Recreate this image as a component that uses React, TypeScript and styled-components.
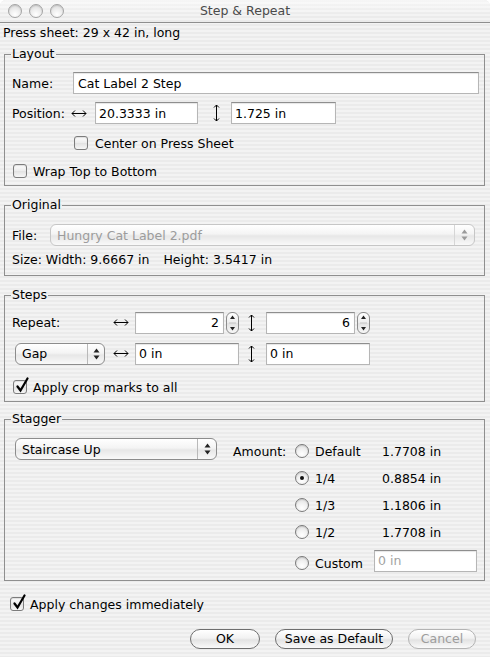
import React from "react";
import styled, { createGlobalStyle } from "styled-components";

const GlobalStyle = createGlobalStyle`
  html, body { margin: 0; padding: 0; background: #ffffff; }
  body {
    font-family: "DejaVu Sans", Verdana, "Liberation Sans", sans-serif;
    font-size: 12.5px;
    color: #000;
  }
  *, *::before, *::after { box-sizing: border-box; }
`;

const stripes =
  "repeating-linear-gradient(to bottom, #ebebeb 0px, #ebebeb 2px, #f3f3f3 2px, #f3f3f3 4px)";

const Window = styled.div`
  width: 490px;
  height: 657px;
  display: flex;
  flex-direction: column;
  background: ${stripes};
  border-radius: 6px 6px 0 0;
  overflow: hidden;
`;

const TitleBar = styled.div`
  flex: none;
  height: 23px;
  display: grid;
  grid-template-columns: 1fr auto 1fr;
  align-items: center;
  border-bottom: 1px solid #8e8e8e;
  background: linear-gradient(rgba(255, 255, 255, 0.55), rgba(255, 255, 255, 0) 70%), ${stripes};
`;

const Lights = styled.div`
  display: flex;
  gap: 7px;
  padding-left: 8px;
`;

const Light = styled.span`
  width: 14px;
  height: 14px;
  border-radius: 50%;
  border: 1px solid #a4a4a4;
  background: radial-gradient(circle at 50% 78%, #ffffff 0%, #f0f0f0 40%, #d4d4d4 100%);
  box-shadow: inset 0 1px 1px rgba(0, 0, 0, 0.12);
`;

const Title = styled.div`
  color: #4a4a4a;
  line-height: 16px;
`;

const Content = styled.div`
  display: flex;
  flex-direction: column;
  padding: 0 5px 0 4px;
`;

const SheetInfo = styled.div`
  height: 16px;
  line-height: 16px;
  margin: 2px 0 0 -1px;
`;

const Group = styled.fieldset<{ $mt: number }>`
  margin: ${(p) => p.$mt}px 0 0 0;
  padding: 0;
  min-width: 0;
  border: 1px solid #8f8f8f;
`;

const GroupTitle = styled.legend`
  margin-left: 6px;
  padding: 0 1px;
  height: 14px;
  line-height: 14px;
`;

const GroupBody = styled.div<{ $pad: string }>`
  padding: ${(p) => p.$pad};
`;

const Row = styled.div<{ $mt?: number; $h?: number; $pl?: number }>`
  display: flex;
  align-items: center;
  margin-top: ${(p) => p.$mt ?? 0}px;
  height: ${(p) => p.$h ?? 22}px;
  padding-left: ${(p) => p.$pl ?? 0}px;
`;

const Label = styled.span<{ $w?: number }>`
  flex: none;
  width: ${(p) => (p.$w ? `${p.$w}px` : "auto")};
  white-space: nowrap;
`;

const Field = styled.input<{ $w?: number; $right?: boolean; $muted?: boolean; $pl?: number }>`
  flex: ${(p) => (p.$w ? "none" : "1")};
  width: ${(p) => (p.$w ? `${p.$w}px` : "auto")};
  min-width: 0;
  height: 22px;
  margin: 0;
  padding: 0 ${(p) => (p.$right ? 4 : 3)}px 0 ${(p) => p.$pl ?? 3}px;
  border: 1px solid #b6b6b6;
  border-top-color: #8e8e8e;
  background: #ffffff;
  box-shadow: inset 0 1px 1px rgba(0, 0, 0, 0.1);
  font: inherit;
  color: ${(p) => (p.$muted ? "#a2a2a2" : "#000")};
  text-align: ${(p) => (p.$right ? "right" : "left")};
  outline: none;
`;

const ArrowSlot = styled.span<{ $ml?: number; $mr?: number }>`
  flex: none;
  display: flex;
  align-items: center;
  margin-left: ${(p) => p.$ml ?? 0}px;
  margin-right: ${(p) => p.$mr ?? 0}px;
`;

const Check = styled.span`
  position: relative;
  flex: none;
  width: 14px;
  height: 14px;
  border-radius: 3px;
  border: 1px solid #7c7c7c;
  background: linear-gradient(#fdfdfd, #ececec 50%, #e2e2e2 51%, #f6f6f6);
  box-shadow: inset 0 1px 1px rgba(0, 0, 0, 0.12);
`;

const CheckMark = styled.svg`
  position: absolute;
  left: 1px;
  top: -4px;
`;

const CheckRow = styled.label<{ $mt: number; $pl: number; $gap?: number }>`
  display: flex;
  align-items: center;
  gap: ${(p) => p.$gap ?? 6}px;
  height: 18px;
  margin-top: ${(p) => p.$mt}px;
  padding-left: ${(p) => p.$pl}px;
`;

const Radio = styled.span<{ $on?: boolean }>`
  flex: none;
  width: 14px;
  height: 14px;
  border-radius: 50%;
  border: 1px solid #7a7a7a;
  background: radial-gradient(circle at 50% 75%, #ffffff 0%, #f1f1f1 45%, #d9d9d9 100%);
  box-shadow: inset 0 1px 1px rgba(0, 0, 0, 0.12);
  display: flex;
  align-items: center;
  justify-content: center;

  &::after {
    content: "";
    display: ${(p) => (p.$on ? "block" : "none")};
    width: 4px;
    height: 4px;
    border-radius: 50%;
    background: #111;
  }
`;

const Popup = styled.div<{ $w?: number; $disabled?: boolean; $ml?: number }>`
  flex: ${(p) => (p.$w ? "none" : "1")};
  width: ${(p) => (p.$w ? `${p.$w}px` : "auto")};
  margin-left: ${(p) => p.$ml ?? 0}px;
  height: 22px;
  display: flex;
  align-items: stretch;
  border: 1px solid ${(p) => (p.$disabled ? "#c6c6c6" : "#8c8c8c")};
  border-radius: 6px;
  background: linear-gradient(#ffffff, #f4f4f4 45%, #e7e7e7 55%, #f9f9f9);
  color: ${(p) => (p.$disabled ? "#9c9c9c" : "#000")};
`;

const PopupText = styled.span`
  flex: 1;
  display: flex;
  align-items: center;
  padding-left: 6px;
  white-space: nowrap;
  overflow: hidden;
`;

const PopupArrows = styled.span<{ $w: number; $disabled?: boolean }>`
  flex: none;
  width: ${(p) => p.$w}px;
  display: flex;
  align-items: center;
  justify-content: center;
  border-left: 1px solid ${(p) => (p.$disabled ? "#d6d6d6" : "#b9b9b9")};
`;

const Stepper = styled.span`
  flex: none;
  width: 13px;
  height: 22px;
  margin-left: 2px;
  border: 1px solid #8c8c8c;
  border-radius: 6px;
  background: linear-gradient(#ffffff, #ececec 50%, #e2e2e2 51%, #f7f7f7);
  display: flex;
  align-items: center;
  justify-content: center;
`;

const NumberBox = styled.div`
  display: flex;
  align-items: center;
  width: 104px;
`;

const StepsGrid = styled.div`
  display: grid;
  grid-template-columns: 101px 22px 104px 27px 104px;
  grid-template-rows: 23px 23px;
  row-gap: 8px;
  align-items: center;
`;

const VSlot = styled.span`
  display: flex;
  padding-left: 9px;
`;

const StaggerBody = styled.div`
  display: flex;
  align-items: flex-start;
  padding: 12px 0 8px 10px;
`;

const AmountGrid = styled.div`
  display: grid;
  grid-template-columns: 62px 20px 59px 103px;
  grid-template-rows: 20px 20px 20px 20px 23px;
  row-gap: 7px;
  align-items: center;
  margin: 3px 0 0 16px;
`;

const Value = styled.span`
  padding-left: 8px;
  white-space: nowrap;
`;

const Shift = styled.span`
  display: flex;
  margin-top: 5px;
`;

const SizeLine = styled.div`
  display: flex;
  gap: 14px;
  height: 16px;
  line-height: 16px;
  margin-top: 6px;
`;

const ButtonBar = styled.div`
  display: flex;
  justify-content: flex-end;
  gap: 15px;
  margin: 16px 9px 0 0;
`;

const Button = styled.button<{ $w: number; $disabled?: boolean }>`
  width: ${(p) => p.$w}px;
  height: 20px;
  margin: 0;
  padding: 0;
  border: 1px solid ${(p) => (p.$disabled ? "#b3b3b3" : "#6e6e6e")};
  border-radius: 10px;
  background: linear-gradient(#ffffff, #f2f2f2 45%, #e3e3e3 55%, #fafafa);
  font: inherit;
  line-height: 18px;
  color: ${(p) => (p.$disabled ? "#9d9d9d" : "#000")};
`;

const HArrow = () => (
  <svg width="16" height="9" viewBox="0 0 16 9">
    <path d="M1 4.5H15M4 1.5L1 4.5L4 7.5M12 1.5L15 4.5L12 7.5" fill="none" stroke="#000" strokeWidth="1" />
  </svg>
);

const VArrow = () => (
  <svg width="7" height="18" viewBox="0 0 7 18">
    <path d="M3.5 1V17M1 3.5L3.5 1L6 3.5M1 14.5L3.5 17L6 14.5" fill="none" stroke="#000" strokeWidth="1" />
  </svg>
);

const UpDown = ({ color = "#222" }: { color?: string }) => (
  <svg width="7" height="12" viewBox="0 0 7 12">
    <path d="M3.5 0.5L6.5 4.5H0.5Z M3.5 11.5L6.5 7.5H0.5Z" fill={color} />
  </svg>
);

const StepArrows = () => (
  <svg width="7" height="18" viewBox="0 0 7 18">
    <path d="M3.5 1.5L6 5H1Z M3.5 16.5L6 13H1Z" fill="#222" />
    <path d="M0 9H7" stroke="#c4c4c4" strokeWidth="1" />
  </svg>
);

const CheckBox = ({ checked }: { checked?: boolean }) => (
  <Check>
    {checked && (
      <CheckMark width="16" height="17" viewBox="0 0 16 17">
        <path d="M2.5 9.5L5.5 13.5L12.5 1.5" fill="none" stroke="#000" strokeWidth="2.2" strokeLinecap="round" />
      </CheckMark>
    )}
  </Check>
);

const amounts = [
  { label: "Default", value: "1.7708 in", on: false },
  { label: "1/4", value: "0.8854 in", on: true },
  { label: "1/3", value: "1.1806 in", on: false },
  { label: "1/2", value: "1.7708 in", on: false },
];

export default function App() {
  return (
    <>
      <GlobalStyle />
      <Window>
        <TitleBar>
          <Lights>
            <Light />
            <Light />
            <Light />
          </Lights>
          <Title>Step &amp; Repeat</Title>
          <span />
        </TitleBar>

        <Content>
          <SheetInfo>Press sheet: 29 x 42 in, long</SheetInfo>

          <Group $mt={6}>
            <GroupTitle>Layout</GroupTitle>
            <GroupBody $pad="11px 5px 5px 7px">
              <Row>
                <Label $w={61}>Name:</Label>
                <Field defaultValue="Cat Label 2 Step" readOnly $pl={4} />
              </Row>
              <Row $mt={8}>
                <Label $w={59}>Position:</Label>
                <ArrowSlot $mr={8}>
                  <HArrow />
                </ArrowSlot>
                <Field $w={103} defaultValue="20.3333 in" readOnly />
                <ArrowSlot $ml={15} $mr={11}>
                  <VArrow />
                </ArrowSlot>
                <Field $w={105} defaultValue="1.725 in" readOnly />
              </Row>
              <CheckRow $mt={10} $pl={62} $gap={7}>
                <CheckBox />
                Center on Press Sheet
              </CheckRow>
              <CheckRow $mt={10} $pl={1}>
                <CheckBox />
                Wrap Top to Bottom
              </CheckRow>
            </GroupBody>
          </Group>

          <Group $mt={12}>
            <GroupTitle>Original</GroupTitle>
            <GroupBody $pad="12px 9px 7px 7px">
              <Row>
                <Label $w={38}>File:</Label>
                <Popup $disabled>
                  <PopupText>Hungry Cat Label 2.pdf</PopupText>
                  <PopupArrows $w={20} $disabled>
                    <UpDown color="#9a9a9a" />
                  </PopupArrows>
                </Popup>
              </Row>
              <SizeLine>
                <span>Size: Width: 9.6667 in</span>
                <span>Height: 3.5417 in</span>
              </SizeLine>
            </GroupBody>
          </Group>

          <Group $mt={12}>
            <GroupTitle>Steps</GroupTitle>
            <GroupBody $pad="9px 5px 5px 7px">
              <StepsGrid>
                <Label>Repeat:</Label>
                <HArrow />
                <NumberBox>
                  <Field $w={89} $right defaultValue="2" readOnly />
                  <Stepper>
                    <StepArrows />
                  </Stepper>
                </NumberBox>
                <VSlot>
                  <VArrow />
                </VSlot>
                <NumberBox>
                  <Field $w={89} $right defaultValue="6" readOnly />
                  <Stepper>
                    <StepArrows />
                  </Stepper>
                </NumberBox>

                <Popup $w={90} $ml={3}>
                  <PopupText>Gap</PopupText>
                  <PopupArrows $w={17}>
                    <UpDown />
                  </PopupArrows>
                </Popup>
                <HArrow />
                <Field $w={104} defaultValue="0 in" readOnly />
                <VSlot>
                  <VArrow />
                </VSlot>
                <Field $w={104} defaultValue="0 in" readOnly />
              </StepsGrid>
              <CheckRow $mt={13} $pl={1}>
                <CheckBox checked />
                Apply crop marks to all
              </CheckRow>
            </GroupBody>
          </Group>

          <Group $mt={10}>
            <GroupTitle>Stagger</GroupTitle>
            <StaggerBody>
              <Popup $w={202}>
                <PopupText>Staircase Up</PopupText>
                <PopupArrows $w={19}>
                  <UpDown />
                </PopupArrows>
              </Popup>
              <AmountGrid>
                {amounts.map((a, i) => (
                  <React.Fragment key={a.label + i}>
                    <Label>{i === 0 ? "Amount:" : ""}</Label>
                    <Radio $on={a.on} />
                    <Label>{a.label}</Label>
                    <Value>{a.value}</Value>
                  </React.Fragment>
                ))}
                <span />
                <Shift>
                  <Radio />
                </Shift>
                <Shift>
                  <Label>Custom</Label>
                </Shift>
                <Field $w={103} $muted defaultValue="0 in" readOnly />
              </AmountGrid>
            </StaggerBody>
          </Group>

          <CheckRow $mt={14} $pl={6}>
            <CheckBox checked />
            Apply changes immediately
          </CheckRow>

          <ButtonBar>
            <Button $w={70}>OK</Button>
            <Button $w={118}>Save as Default</Button>
            <Button $w={68} $disabled>
              Cancel
            </Button>
          </ButtonBar>
        </Content>
      </Window>
    </>
  );
}
